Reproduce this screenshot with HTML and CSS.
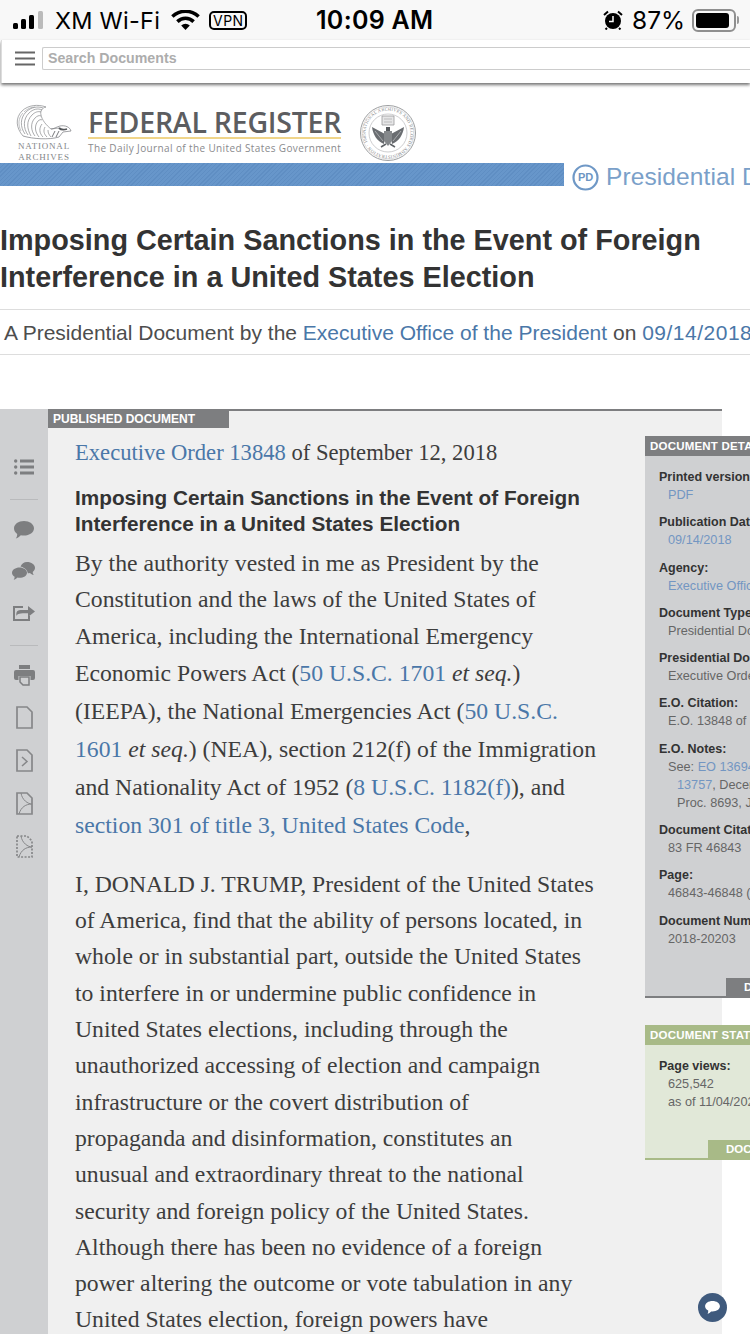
FILE: index.html
```html
<!DOCTYPE html>
<html lang="en">
<head>
<meta charset="utf-8">
<title>Federal Register</title>
<link rel="stylesheet" href="styles.css">
</head>
<body>
<div class="page">
  <div class="status">
    <div class="status-left">
      <svg class="signal" viewBox="0 0 32 18" width="32" height="18"><rect x="0" y="12" width="5" height="6" rx="1.5" fill="#000"/><rect x="8" y="8" width="5" height="10" rx="1.5" fill="#000"/><rect x="16" y="4" width="5" height="14" rx="1.5" fill="#000"/><rect x="25" y="0" width="5" height="18" rx="1.5" fill="#bbb"/></svg>
      <span class="carrier">XM Wi-Fi</span>
      <svg class="wifi" viewBox="0 0 32 22" width="31" height="21"><path d="M16 21 11.500 16.300a6.500 6.500 0 0 1 9 0Z" fill="#000"/><path d="M8.800 13.500a10.300 10.300 0 0 1 14.400 0l2.600-2.700a14 14 0 0 0-19.600 0Z" fill="#000"/><path d="M3.500 8.200a18 18 0 0 1 25 0L31 5.500a21.700 21.700 0 0 0-30 0Z" fill="#000"/></svg>
      <span class="vpn">VPN</span>
    </div>
    <div class="clock">10:09 AM</div>
    <div class="status-right">
      <svg class="alarm" viewBox="0 0 20 20" width="20" height="20"><circle cx="10" cy="11" r="8" fill="#000"/><path d="M1 5 5 1.500M19 5 15 1.500M4 18 2.500 19.500M16 18l1.500 1.500" stroke="#000" stroke-width="2"/><path d="M10 6v5.500H6" stroke="#fff" stroke-width="1.500" fill="none"/></svg>
      <span class="pct">87%</span>
      <span class="battery"><span class="battery-fill"></span></span>
      <span class="battery-cap"></span>
    </div>
  </div>

  <div class="searchbar">
    <svg class="burger" viewBox="0 0 20 15" width="20" height="15"><path d="M0 1.500h20M0 7.500h20M0 13.500h20" stroke="#666" stroke-width="2.200"/></svg>
    <div class="searchbox">Search Documents</div>
  </div>

  <header class="masthead">
    <div class="nara">
      <svg class="eagle" viewBox="0 0 58 36" width="58" height="36" fill="none" stroke="#85878a" stroke-width=".7"><path d="M8 32C1 24 0 14 7 7 13 1 23 0 31 3 27 4 25 7 26 11 27 16 31 21 36 25L44 24"/><path d="M10 30C5 23 5 14 11 8 16 3 23 2 28 4M13 31C8 24 8 15 14 9 18 5 23 4 27 6M16 32C12 25 11 17 17 11 20 8 23 7 26 8M20 32C16 27 15 19 20 14 22 12 24 11 26 12M24 33C20 28 19 22 23 17 24 16 26 15 27 16M28 33C24 29 24 24 27 20M32 33C29 30 28 27 30 23M36 33C34 31 33 29 33 26"/><path d="M6 27C3 21 3 14 8 9M9 8C12 5 16 3 20 3" stroke-width=".5"/><path d="M8 32C18 35 34 36 44 33L48 28 56 27C55 23 50 21 45 22 41 23 39 25 36 25" stroke="#77797c"/><path d="M44 24C46 26 49 26 52 25" stroke="#55575a" stroke-width="1.800"/><path d="M40 27 37 33M44 27 41 33" stroke="#77797c" stroke-width="1"/></svg>
      <div class="nara-text">NATIONAL<br>ARCHIVES</div>
    </div>
    <div class="fr-title">
      <div class="fr-name">FEDERAL REGISTER</div>
      <div class="fr-tag">The Daily Journal of the United States Government</div>
    </div>
    <svg class="seal" viewBox="0 0 58 58" width="58" height="58" fill="none"><defs><path id="sealring" d="M29 29m-22.500 0a22.500 22.500 0 1 1 45 0a22.500 22.500 0 1 1-45 0"/></defs><circle cx="29" cy="29" r="27.500" stroke="#9c9ea0" stroke-width="1"/><circle cx="29" cy="29" r="26" stroke="#c9cacb" stroke-width=".6"/><text class="seal-text"><textPath href="#sealring">NATIONAL ARCHIVES AND RECORDS ADMINISTRATION · 1985 ·</textPath></text><circle cx="29" cy="29" r="19" stroke="#b7b8ba" stroke-width=".7"/><path d="M23 12h12v9H23Z" fill="#e6e6e7" stroke="#9a9b9d" stroke-width=".8"/><path d="M25 15h8M25 18h8" stroke="#a9aaac" stroke-width=".7"/><path d="M13 23C14 31 18 37 25 40L26 30ZM45 23C44 31 40 37 33 40L32 30Z" fill="#6a6d71"/><path d="M16 27 24 37M42 27 34 37" stroke="#c2c3c5" stroke-width=".7"/><path d="M25 27h8v10L29 42 25 37Z" fill="#85888b"/><path d="M27 23h4v4h-4Z" fill="#55585c"/><path d="M22 43 27 40M36 43 31 40" stroke="#5e6266" stroke-width="1.500"/></svg>
  </header>

  <div class="band-row">
    <div class="band"></div>
    <svg class="pd-icon" viewBox="0 0 27 27" width="27" height="27"><circle cx="13.500" cy="13.500" r="12" fill="none" stroke="#6f98c6" stroke-width="2.200"/></svg>
    <span class="pd-mark">PD</span>
    <span class="band-label">Presidential Document</span>
  </div>

  <h1 class="title">Imposing Certain Sanctions in the Event of Foreign<br>Interference in a United States Election</h1>

  <div class="byline">A Presidential Document by the <a>Executive Office of the President</a> on <a class="date">09/14/2018</a></div>

  <div class="doc">
    <nav class="rail">
      <svg class="ic ic-list" viewBox="0 0 20 16" width="20" height="16"><path d="M6 2h14M6 8h14M6 14h14" stroke="#7d7e80" stroke-width="3"/><circle cx="1.700" cy="2" r="1.700" fill="#7d7e80"/><circle cx="1.700" cy="8" r="1.700" fill="#7d7e80"/><circle cx="1.700" cy="14" r="1.700" fill="#7d7e80"/></svg>
      <div class="rule rule-a"></div>
      <svg class="ic ic-comment" viewBox="0 0 20 18" width="20" height="18"><path d="M10 0C15.500 0 20 3.100 20 7.300S15.500 14.600 10 14.600C8.800 14.600 7.800 14.500 6.800 14.200 5.500 15.800 3.700 17 1.800 17.500 2.800 16.200 3.200 14.700 3.200 13 1.200 11.600 0 9.600 0 7.300 0 3.100 4.500 0 10 0Z" fill="#7d7e80"/></svg>
      <svg class="ic ic-comments" viewBox="0 0 23 18" width="23" height="18"><path d="M15 0C19.400 0 23 2.500 23 5.800 23 7.500 22.200 9 20.700 10 20.700 11 21 12 21.700 13 20.200 12.700 19 11.800 18 10.900 17.200 11.200 16.500 11.300 15.800 11.300 15.500 8.500 13.200 5.800 8.500 4.600 9.500 1.800 12 0 15 0Z" fill="#7d7e80"/><path d="M7.500 5.500C11.600 5.500 15 7.800 15 10.700S11.600 15.800 7.500 15.800C6.800 15.800 6.200 15.700 5.500 15.600 4.500 16.800 3 17.700 1.500 18 2.200 17.200 2.600 16 2.600 14.700 1 13.700 0 12.300 0 10.700 0 7.800 3.400 5.500 7.500 5.500Z" fill="#7d7e80"/></svg>
      <svg class="ic ic-share" viewBox="0 0 22 18" width="22" height="18"><path d="M15 7H7.500C3 7 3 11 3.500 13 4.500 10.500 6.500 10.300 15 10.300V14L22 8.500 15 3Z" fill="#7d7e80"/><path d="M10 4H1v13h15v-4" fill="none" stroke="#7d7e80" stroke-width="2"/></svg>
      <div class="rule rule-b"></div>
      <svg class="ic ic-print" viewBox="0 0 21 21" width="21" height="21"><path d="M5 0h11v4H5Z" fill="#7d7e80"/><path d="M2 5h17a2 2 0 0 1 2 2v6a2 2 0 0 1-2 2h-2.500v-4H4.500v4H2a2 2 0 0 1-2-2V7a2 2 0 0 1 2-2Z" fill="#7d7e80"/><path d="M6 12h9v8H9l-3-3Z" fill="none" stroke="#7d7e80" stroke-width="1.500"/></svg>
      <svg class="ic ic-file" viewBox="0 0 17 23" width="17" height="23"><path d="M1 1h10l5 5v16H1Z" fill="none" stroke="#868789" stroke-width="1.700"/></svg>
      <svg class="ic ic-file" viewBox="0 0 17 23" width="17" height="23"><path d="M1 1h10l5 5v16H1Z" fill="none" stroke="#868789" stroke-width="1.700"/><path d="M6 8l5 4.500L6 17" fill="none" stroke="#868789" stroke-width="1.500"/></svg>
      <svg class="ic ic-file" viewBox="0 0 17 23" width="17" height="23"><path d="M1 1h10l5 5v16H1Z" fill="none" stroke="#868789" stroke-width="1.700"/><path d="M5 1C6 8 12 12 16 12 10 12 5 15 3 22" fill="none" stroke="#868789" stroke-width="1"/></svg>
      <svg class="ic ic-file" viewBox="0 0 17 23" width="17" height="23"><path d="M1 1h10l5 5v16H1Z" fill="none" stroke="#868789" stroke-width="1.700" stroke-dasharray="2 1.500"/><path d="M5 1C6 8 12 12 16 12 10 12 5 15 3 22" fill="none" stroke="#868789" stroke-width="1"/></svg>
    </nav>
    <main class="main">
      <div class="tab">PUBLISHED DOCUMENT</div>
      <div class="columns">
        <article class="body">
          <p class="eo"><a>Executive Order 13848</a> of September 12, 2018</p>
          <h2 class="eo-title">Imposing Certain Sanctions in the Event of Foreign<br>Interference in a United States Election</h2>
          <p class="para">By the authority vested in me as President by the<br>Constitution and the laws of the United States of<br>America, including the International Emergency<br>Economic Powers Act (<a>50 U.S.C. 1701</a> <em>et seq.</em>)<br>(IEEPA), the National Emergencies Act (<a>50 U.S.C.<br>1601</a> <em>et seq.</em>) (NEA), section 212(f) of the Immigration<br>and Nationality Act of 1952 (<a>8 U.S.C. 1182(f)</a>), and<br><a>section 301 of title 3, United States Code</a>,</p>
          <p class="para para-2">I, DONALD J. TRUMP, President of the United States<br>of America, find that the ability of persons located, in<br>whole or in substantial part, outside the United States<br>to interfere in or undermine public confidence in<br>United States elections, including through the<br>unauthorized accessing of election and campaign<br>infrastructure or the covert distribution of<br>propaganda and disinformation, constitutes an<br>unusual and extraordinary threat to the national<br>security and foreign policy of the United States.<br>Although there has been no evidence of a foreign<br>power altering the outcome or vote tabulation in any<br>United States election, foreign powers have</p>
        </article>
        <aside class="aside">
          <section class="panel panel-details">
            <div class="panel-head">DOCUMENT DETAILS</div>
            <dl class="facts">
              <dt>Printed version:</dt><dd><a>PDF</a></dd>
              <dt>Publication Date:</dt><dd><a>09/14/2018</a></dd>
              <dt>Agency:</dt><dd><a>Executive Office of the President</a></dd>
              <dt>Document Type:</dt><dd>Presidential Document</dd>
              <dt>Presidential Document Type:</dt><dd>Executive Order</dd>
              <dt>E.O. Citation:</dt><dd>E.O. 13848 of September 12, 2018</dd>
              <dt>E.O. Notes:</dt><dd>See: <a>EO 13694</a>, April 1, 2015;<br><span class="ind"><a>13757</a>, December 28, 2016;</span><br><span class="ind">Proc. 8693, July 24, 2011</span></dd>
              <dt>Document Citation:</dt><dd>83 FR 46843</dd>
              <dt>Page:</dt><dd>46843-46848 (6 pages)</dd>
              <dt>Document Number:</dt><dd>2018-20203</dd>
            </dl>
            <div class="panel-foot panel-foot-details">DOCUMENT DETAILS</div>
          </section>
          <section class="panel panel-stats">
            <div class="panel-head">DOCUMENT STATISTICS</div>
            <dl class="facts">
              <dt>Page views:</dt><dd>625,542<br>as of 11/04/2020</dd>
            </dl>
            <div class="panel-foot panel-foot-stats">DOCUMENT STATISTICS</div>
          </section>
        </aside>
      </div>
    </main>
  </div>
</div>
<button class="chat" aria-label="Chat"><svg viewBox="0 0 16 14" width="15" height="13"><path d="M8 0C12.400 0 16 2.400 16 5.700S12.400 11.300 8 11.300L6.500 11.200C5.500 12.500 4 13.400 2.700 13.700 3.300 12.700 3.500 11.500 3.400 10.300 1.300 9.300 0 7.600 0 5.700 0 2.400 3.600 0 8 0Z" fill="#fff"/></svg></button>
</body>
</html>
```
FILE: styles.css
```css
* { box-sizing: border-box; }
html, body { margin: 0; padding: 0; background: #fff; }
body { width: 750px; height: 1334px; overflow: hidden; position: relative; font-family: "Liberation Sans", Arial, sans-serif; }
a { color: #4a77a8; text-decoration: none; }
.page { width: 750px; height: 1334px; overflow: hidden; }

.status { height: 40px; background: #f8f8f8; display: flex; align-items: center; padding: 0 0 0 13px; position: relative; color: #000; }
.status-left { display: flex; align-items: center; width: 303px; }
.signal { margin-right: 10px; }
.carrier { font: 23.500px "Inter", "Liberation Sans", sans-serif; letter-spacing: .25px; white-space: nowrap; margin-right: 10px; }
.wifi { margin-right: 8px; }
.vpn { border: 2px solid #000; border-radius: 5px; font: 14px "Inter", sans-serif; line-height: 15px; padding: 0 2px; letter-spacing: .4px; }
.clock { font: 600 25px "Inter", sans-serif; letter-spacing: .3px; white-space: nowrap; width: 287px; }
.status-right { display: flex; align-items: center; }
.alarm { margin-right: 10px; }
.pct { font: 24.500px "Inter", sans-serif; margin-right: 7px; margin-left: -1px; }
.battery { width: 44px; height: 23px; border: 2px solid #8f8f8f; border-radius: 6px; padding: 2px; display: block; }
.battery-fill { display: block; width: 33px; height: 15px; background: #000; border-radius: 3px; }
.battery-cap { width: 2px; height: 8px; background: #999; border-radius: 0 2px 2px 0; margin-left: 1px; }

.searchbar { height: 43px; background: #fff; margin-left: 1px; display: flex; align-items: flex-start; padding: 7px 0 0 13px; box-shadow: 0 2px 3px rgba(0,0,0,.55); border-left: 1px solid #ddd; position: relative; }
.burger { margin: 4px 7px 0 0; flex: none; }
.searchbox { flex: 1; height: 23px; border: 1px solid #ccc; border-right: 0; border-radius: 2px 0 0 2px; font: bold 14.200px/21px "Liberation Sans", sans-serif; color: #adadad; padding-left: 5px; }

.masthead { height: 80px; display: flex; align-items: flex-start; padding: 21px 0 0 15px; position: relative; }
.nara { width: 58px; margin-right: 15px; display: flex; flex-direction: column; }
.eagle { display: block; }
.nara-text { font: 9px/11px "Liberation Serif", serif; letter-spacing: .8px; color: #85878a; text-align: center; margin-top: 1px; white-space: nowrap; }
.fr-title { width: 253px; margin-right: 18px; padding-top: 3px; }
.fr-name { font: 600 28.500px/30px "Open Sans", sans-serif; color: #5c5d60; border-bottom: 2px solid #f0d58a; height: 32px; white-space: nowrap; letter-spacing: -.25px; }
.fr-tag { font: 10px/14px "Open Sans", sans-serif; color: #898a8d; letter-spacing: .38px; white-space: nowrap; margin-top: 2px; }
.seal-text { font: 4.400px "Liberation Serif", serif; fill: #77797c; letter-spacing: .25px; }

.band-row { height: 27px; margin-top: -1px; display: flex; align-items: flex-start; position: relative; white-space: nowrap; }
.band { width: 564px; height: 23px; flex: none; margin-top: 1px; background: #6392c6 repeating-linear-gradient(-45deg, #5f8ec3 0 1px, #6796ca 1px 3px); }
.pd-icon { margin: 2px 0 0 8px; flex: none; }
.pd-mark { font: bold 11px "Liberation Sans", sans-serif; color: #6d96c3; width: 0; position: relative; left: -21px; top: 9px; }
.band-label { font: 24.500px/28px "Liberation Sans", sans-serif; color: #7aa0c9; margin: 1px 0 0 7px; letter-spacing: .1px; }

.title { font: bold 28.800px/37px "Liberation Sans", sans-serif; color: #333; margin: 33px 0 0 0; white-space: nowrap; }
.byline { margin-top: 13px; height: 46px; border-top: 1px solid #ddd; border-bottom: 1px solid #ddd; padding-left: 4px; font: 21px/45px "Liberation Sans", sans-serif; color: #4d4d4d; white-space: nowrap; }
.date { letter-spacing: .5px; }

.doc { margin-top: 54px; width: 722px; height: 940px; display: flex; }
.rail { width: 48px; flex: none; background: #cfd0d2; display: flex; flex-direction: column; align-items: center; padding-top: 50px; }
.rail .ic { display: block; flex: none; }
.ic-list { margin-left: -1px; }
.rule { width: 28px; height: 1px; background: #b9babc; flex: none; }
.rule-a { margin-top: 24px; }
.ic-comment { margin-top: 21px; }
.ic-comments { margin-top: 23px; margin-right: 2px; }
.ic-share { margin-top: 23px; }
.rule-b { margin-top: 24px; }
.ic-print { margin-top: 19px; }
.rail .ic-file { margin-top: 20px; }

.main { flex: 1; background: #f0f0f0; border-top: 2px solid #7d7e80; min-width: 0; }
.tab { width: 181px; height: 17px; background: #7d7e80; color: #fff; font: bold 12px/17px "Liberation Sans", sans-serif; padding-left: 5px; white-space: nowrap; }
.columns { display: flex; }
.body { width: 597px; flex: none; padding: 8px 0 0 27px; font-family: "Liberation Serif", serif; color: #3d3d3d; }
.eo { margin: 0; font-size: 22.600px; line-height: 34px; white-space: nowrap; }
.eo-title { margin: 15px 0 0; font: bold 20.750px/26px "Liberation Sans", sans-serif; color: #333; white-space: nowrap; }
.para { margin: 8px 0 0; font-size: 23.700px; line-height: 36.300px; white-space: nowrap; }
.para a { line-height: 38px; }
.para-2 { margin-top: 22px; }
.para em { font-style: italic; }

.aside { width: 260px; flex: none; padding-top: 8px; }
.panel { position: relative; }
.panel-details { height: 562px; background: #cfd0d2; border-bottom: 2px solid #7d7e80; }
.panel-stats { height: 135px; margin-top: 27px; background: #e1e8d8; border-bottom: 2px solid #a8ba87; }
.panel-head { height: 20px; font: bold 11.500px/20px "Liberation Sans", sans-serif; color: #fff; padding-left: 5px; white-space: nowrap; letter-spacing: .2px; }
.panel-details .panel-head { background: #7d7e80; }
.panel-stats .panel-head { background: #a8ba87; }
.facts { margin: 0; padding: 14px 0 0 14px; }
.facts dt { font: bold 12.500px/14px "Liberation Sans", sans-serif; color: #333; white-space: nowrap; }
.facts dd { margin: 2px 0 11.300px 9px; font: 12.700px/18px "Liberation Sans", sans-serif; color: #666; white-space: nowrap; }
.facts dd a { color: #7396c2; }
.ind { padding-left: 9px; }
.panel-foot { position: absolute; bottom: 0; height: 18px; color: #fff; font: bold 11.500px/18px "Liberation Sans", sans-serif; padding-left: 18px; white-space: nowrap; }
.panel-foot-details { left: 81px; width: 180px; background: #7d7e80; }
.panel-foot-stats { left: 63px; width: 180px; background: #a8ba87; }

.chat { position: absolute; left: 698px; top: 1293px; width: 29px; height: 29px; border-radius: 50%; background: #3f5a7d; border: 0; padding: 0; display: flex; align-items: center; justify-content: center; }
```
